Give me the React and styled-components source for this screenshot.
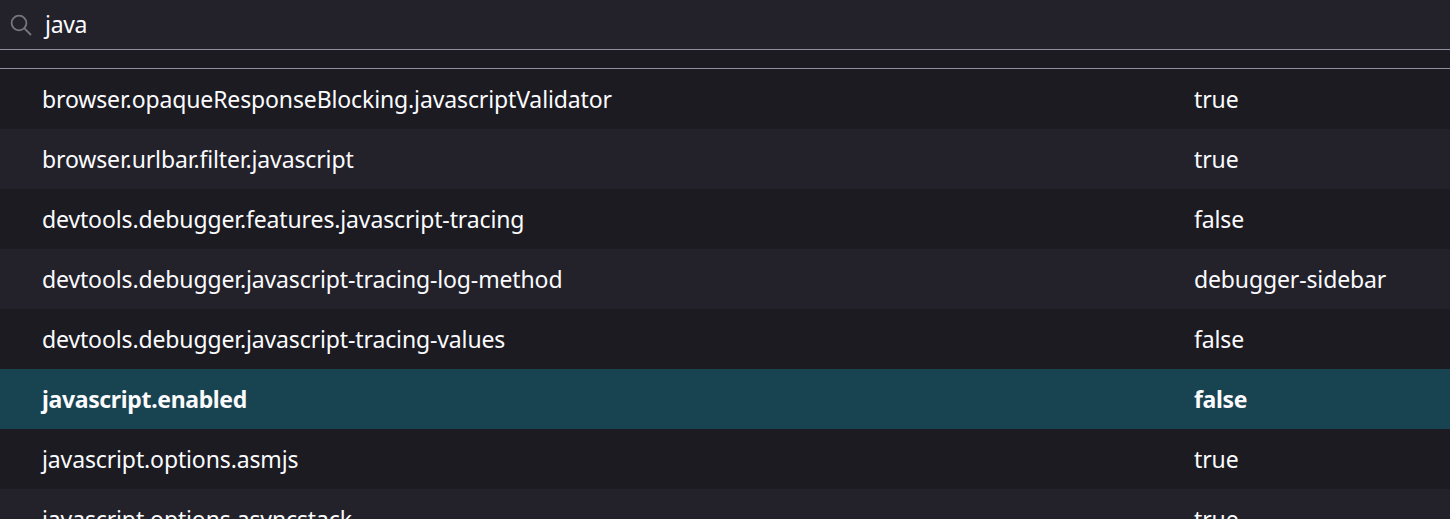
import { createGlobalStyle, styled } from "styled-components";

const GlobalStyle = createGlobalStyle`
  html, body {
    margin: 0;
    height: 100%;
    overflow: hidden;
    background: #1c1b22;
  }
`;

const Page = styled.div`
  height: 519px;
  overflow: hidden;
  background: #1c1b22;
  color: #fbfbfe;
  font-family: "Noto Sans", "Open Sans", sans-serif;
  font-size: 23px;
  letter-spacing: -0.13px;
`;

const SearchBar = styled.div`
  height: 49px;
  display: flex;
  align-items: center;
  gap: 13px;
  padding-left: 10px;
  background: #23222b;
  border-bottom: 1px solid #8f8f9d;
`;

const SearchIcon = styled.svg`
  width: 22px;
  height: 22px;
  flex: none;
`;

const SearchText = styled.span`
  margin-top: -2px;
  letter-spacing: -0.3px;
`;

const Gap = styled.div`
  height: 18px;
  border-bottom: 1px solid #8f8f9d;
`;

const Row = styled.div`
  height: 60px;
  display: grid;
  grid-template-columns: 1152px 1fr;
  align-items: center;
  padding-left: 42px;
  box-sizing: border-box;
  background: ${(p) => (p.$active ? "#184350" : p.$odd ? "#23222b" : "#1c1b22")};
  font-weight: ${(p) => (p.$active ? 700 : 400)};
  letter-spacing: ${(p) => (p.$active ? "-0.35px" : "inherit")};
`;

const rows = [
  ["browser.opaqueResponseBlocking.javascriptValidator", "true"],
  ["browser.urlbar.filter.javascript", "true"],
  ["devtools.debugger.features.javascript-tracing", "false"],
  ["devtools.debugger.javascript-tracing-log-method", "debugger-sidebar"],
  ["devtools.debugger.javascript-tracing-values", "false"],
  ["javascript.enabled", "false", true],
  ["javascript.options.asmjs", "true"],
  ["javascript.options.asyncstack", "true"],
];

export default function App() {
  return (
    <Page>
      <GlobalStyle />
      <SearchBar>
        <SearchIcon viewBox="0 0 22 22" fill="none" stroke="#77767f" strokeWidth="1.8">
          <circle cx="9" cy="9" r="7.4" />
          <path d="M14.4 14.4 21 21" />
        </SearchIcon>
        <SearchText>java</SearchText>
      </SearchBar>
      <Gap />
      {rows.map(([name, value, active], i) => (
        <Row key={name} $odd={i % 2 === 1} $active={active}>
          <span>{name}</span>
          <span>{value}</span>
        </Row>
      ))}
    </Page>
  );
}
